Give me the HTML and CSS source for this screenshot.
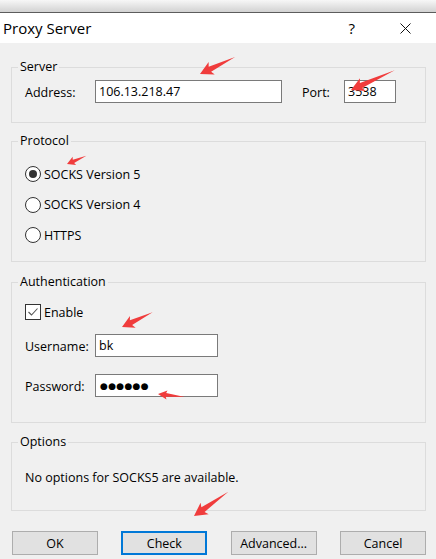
FILE: index.html
```html
<!DOCTYPE html>
<html>
<head>
<meta charset="utf-8">
<link rel="stylesheet" href="styles.css">
</head>
<body>
<div class="shadow"></div>
<div class="titlebar">
  <span class="title">Proxy Server</span>
  <span class="help">?</span>
  <svg class="close" width="11" height="11" viewBox="0 0 11 11"><path d="M0.5 0.5 L10.5 10.5 M10.5 0.5 L0.5 10.5" stroke="#111" stroke-width="1" fill="none"/></svg>
</div>
<main class="content">
  <fieldset class="group server">
    <legend>Server</legend>
    <div class="row">
      <span class="label addr">Address:</span>
      <div class="field wide">106.13.218.47</div>
      <span class="label port">Port:</span>
      <div class="field small">3538</div>
    </div>
  </fieldset>

  <fieldset class="group protocol">
    <legend>Protocol</legend>
    <div class="radios">
      <div class="option"><span class="radio checked"></span><span class="opt-text">SOCKS Version 5</span></div>
      <div class="option"><span class="radio"></span><span class="opt-text">SOCKS Version 4</span></div>
      <div class="option"><span class="radio"></span><span class="opt-text">HTTPS</span></div>
    </div>
  </fieldset>

  <fieldset class="group auth">
    <legend>Authentication</legend>
    <div class="option enable"><span class="check"><svg width="14" height="14" viewBox="0 0 14 14"><polyline points="2.5,7 5.5,10 11.5,3.5" fill="none" stroke="#555" stroke-width="1.1"/></svg></span><span class="opt-text">Enable</span></div>
    <div class="row user">
      <span class="label addr">Username:</span>
      <div class="field mid">bk</div>
    </div>
    <div class="row pass">
      <span class="label addr">Password:</span>
      <div class="field mid dots">●●●●●●</div>
    </div>
  </fieldset>

  <fieldset class="group options">
    <legend>Options</legend>
    <p class="note">No options for SOCKS5 are available.</p>
  </fieldset>

  <div class="buttons">
    <div class="btn">OK</div>
    <div class="btn default">Check</div>
    <div class="btn">Advanced...</div>
    <div class="btn">Cancel</div>
  </div>
</main>

<svg class="marks" width="436" height="559" viewBox="0 0 436 559">
  <g fill="#f03c3c">
    <polygon transform="translate(200 74) rotate(-25.9)" points="0,0 13,-7 11,-2.8 39,0 11,2.8 13,7"/>
    <polygon transform="translate(351 90) rotate(-24.4)" points="0,0 13,-7 11,-2.8 48,0 11,2.8 13,7"/>
    <polygon transform="translate(67 164) rotate(-22.8)" points="0,0 8,-4.5 7,-1.8 21,0 7,1.8 8,4.5"/>
    <polygon transform="translate(122 327) rotate(-25.8)" points="0,0 12,-6.5 10,-2.6 34,0 10,2.6 12,6.5"/>
    <polygon transform="translate(158 394) rotate(6.3)" points="0,0 9,-4.5 8,-2 27,0 8,2 9,4.5"/>
    <polygon transform="translate(194 516) rotate(-35.2)" points="0,0 13,-7 11,-2.8 42,0 11,2.8 13,7"/>
  </g>
</svg>
</body>
</html>
```

FILE: styles.css
```css
* { box-sizing: border-box; }

body {
  margin: 0;
  width: 436px;
  height: 559px;
  overflow: hidden;
  position: relative;
  background: #f0f0f0;
  font-family: "Open Sans", "Noto Sans", sans-serif;
  font-size: 12.5px;
  line-height: 16px;
  color: #000;
}

.shadow {
  height: 12px;
  background: linear-gradient(#f7f7f7, #d2d2d2);
}

.titlebar {
  height: 31px;
  border-top: 1px solid #5c5c5c;
  background: #fff;
  display: flex;
  align-items: center;
}

.title {
  flex: 1;
  font-size: 15px;
  margin-left: 3px;
  margin-top: -1px;
}

.help {
  font-size: 15px;
  margin-right: 45px;
  margin-top: -1px;
}

.close {
  margin-right: 25px;
  display: block;
}

.content {
  padding: 0 10px 0 11px;
}

.group {
  margin: 0;
  border: 1px solid #dcdcdc;
  padding: 0 6px;
  min-width: 0;
}

.group legend {
  padding: 0 2px;
  line-height: 16px;
}

.server {
  margin-top: 16px;
  padding-top: 5px;
  padding-bottom: 19px;
}

.row {
  display: flex;
  align-items: center;
  padding-left: 7px;
}

.label { padding-top: 2px; }
.label.addr { width: 70px; }
.label.port { width: 42px; margin-left: 20px; }

.field {
  height: 23px;
  border: 1px solid #7a7a7a;
  background: #fff;
  padding: 1px 3px 0;
  display: flex;
  align-items: center;
  white-space: nowrap;
}

.field.wide { width: 187px; }
.field.small { width: 52px; }
.field.mid { width: 123px; }

.field.dots {
  font-family: "DejaVu Sans", sans-serif;
  font-size: 9px;
  letter-spacing: 0.3px;
  padding: 0 0 0 4px;
}

.protocol {
  margin-top: 10px;
  padding-top: 17px;
  padding-bottom: 18px;
}

.radios {
  display: flex;
  flex-direction: column;
  gap: 14.5px;
}

.option {
  display: flex;
  align-items: center;
  gap: 3px;
  padding-left: 7px;
  height: 16px;
}

.opt-text { padding-top: 1px; }

.radio {
  width: 16px;
  height: 16px;
  border: 1px solid #333;
  border-radius: 50%;
  background: #fff;
  display: flex;
  align-items: center;
  justify-content: center;
}

.radio.checked::after {
  content: "";
  width: 8px;
  height: 8px;
  border-radius: 50%;
  background: #333;
}

.auth {
  margin-top: 12px;
  padding-top: 14px;
  padding-bottom: 25px;
}

.check {
  width: 16px;
  height: 16px;
  border: 1px solid #333;
  background: #fff;
  display: flex;
  align-items: center;
  justify-content: center;
}

.check svg { display: block; }

.row.user { margin-top: 14px; }
.row.pass { margin-top: 17px; }

.options {
  margin-top: 11px;
  padding-top: 19px;
  padding-bottom: 25px;
}

.note {
  margin: 0;
  padding-left: 7px;
  padding-top: 1px;
  height: 16px;
  box-sizing: content-box;
}

.options { padding-bottom: 24px; }

.buttons {
  margin-top: 20px;
  padding-left: 1px;
  display: flex;
  justify-content: space-between;
}

.btn {
  width: 86px;
  height: 24px;
  border: 1px solid #adadad;
  background: #e1e1e1;
  display: flex;
  align-items: center;
  justify-content: center;
  padding-top: 2px;
}

.btn.default {
  border: 2px solid #0078d7;
}

.marks {
  position: absolute;
  left: 0;
  top: 0;
  pointer-events: none;
}
```
